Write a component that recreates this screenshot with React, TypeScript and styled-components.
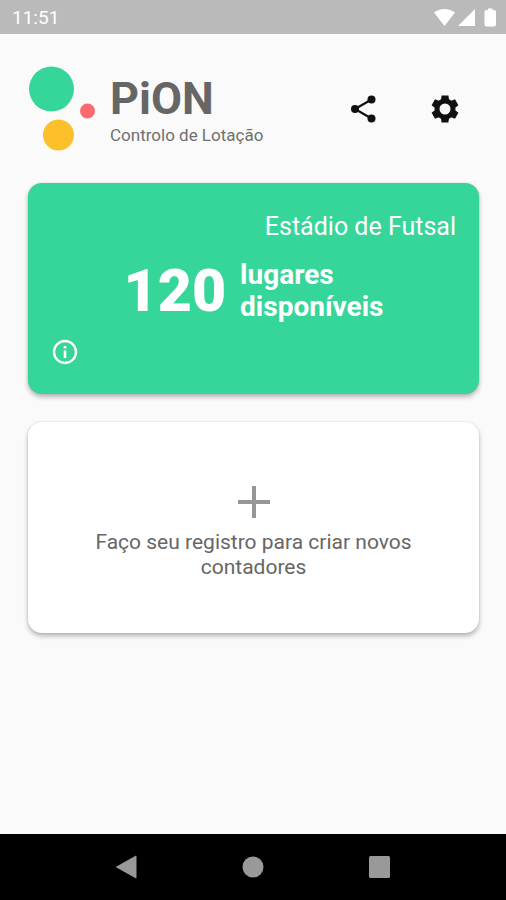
import React from "react";
import styled, { createGlobalStyle } from "styled-components";

const GlobalStyle = createGlobalStyle`
  * { box-sizing: border-box; }
  body { margin: 0; background: #fafafa; font-family: Roboto, sans-serif; }
  svg { display: block; }
  button { font: inherit; border: 0; padding: 0; background: none; color: inherit; cursor: pointer; }
  h1, h2, p { margin: 0; }
`;

const Screen = styled.div`
  min-height: 100vh;
  display: flex;
  flex-direction: column;
  background: #fafafa;
`;

const StatusBar = styled.div`
  height: 34px;
  flex: none;
  display: flex;
  align-items: center;
  justify-content: space-between;
  padding: 2px 8px 0 12px;
  background: #bababa;
  color: #fff;
  font-size: 19px;
  line-height: 24px;
`;

const Content = styled.main`
  flex: 1;
  display: flex;
  flex-direction: column;
  gap: 28px;
  padding: 32px 27px 28px 28px;
`;

const Header = styled.header`
  display: flex;
  align-items: center;
  justify-content: space-between;
  margin-bottom: 3px;
`;

const Brand = styled.div`
  display: flex;
  align-items: center;
  gap: 14px;
`;

const BrandText = styled.div`
  padding-top: 4px;
`;

const BrandName = styled.h1`
  font-size: 45px;
  line-height: 48px;
  font-weight: 700;
  color: #666;
`;

const Tagline = styled.p`
  font-size: 17px;
  line-height: 24px;
  color: #707070;
`;

const Actions = styled.div`
  display: flex;
  gap: 50px;
  padding-right: 18px;
`;

const IconButton = styled.button`
  width: 32px;
  height: 32px;
  display: grid;
  place-items: center;
`;

const Card = styled.section`
  min-height: 211px;
  display: flex;
  flex-direction: column;
  border-radius: 14px;
  box-shadow: 0 3px 5px rgba(0, 0, 0, 0.28), 0 0 2px rgba(0, 0, 0, 0.12);
`;

const VenueCard = styled(Card)`
  padding: 28px 23px;
  background: #36d59a;
  color: #fff;
`;

const VenueName = styled.h2`
  font-size: 25px;
  line-height: 32px;
  font-weight: 400;
  text-align: right;
`;

const Availability = styled.div`
  display: flex;
  align-items: center;
  justify-content: center;
  gap: 14px;
  margin-top: 16px;
`;

const Count = styled.span`
  font-size: 59px;
  line-height: 64px;
  font-weight: 900;
`;

const CountLabel = styled.span`
  font-size: 28px;
  line-height: 32px;
  font-weight: 700;
`;

const InfoButton = styled(IconButton)`
  margin-top: 15px;
  width: 28px;
  height: 28px;
`;

const AddCard = styled(Card)`
  background: #fff;
`;

const AddButton = styled.button`
  flex: 1;
  display: flex;
  flex-direction: column;
  align-items: center;
  justify-content: center;
  gap: 12px;
  padding: 10px 60px 0;
  && {
    font-size: 21px;
    line-height: 25px;
    color: #666;
  }
`;

const NavBar = styled.nav`
  height: 66px;
  flex: none;
  display: grid;
  grid-template-columns: repeat(3, 25%);
  justify-content: center;
  align-items: center;
  background: #000;
`;

const NavButton = styled.button`
  height: 48px;
  display: grid;
  place-items: center;
`;

const Logo = () => (
  <svg width="68" height="86" viewBox="0 0 68 86" aria-hidden="true">
    <circle cx="23.5" cy="23" r="22.5" fill="#36d59a" />
    <circle cx="59.5" cy="45" r="7.5" fill="#f96b70" />
    <circle cx="30.5" cy="69" r="15.5" fill="#fcc02a" />
  </svg>
);

const StatusIcons = () => (
  <svg width="64" height="20" viewBox="0 0 64 20" fill="#fff" aria-hidden="true">
    <path d="M0 4.5C6 -.2 15 -.2 21 4.5L10.500 18Z" />
    <path d="M41 1V18H24Z" />
    <path d="M52.500 2H54V.5H58.500V2H60Q62 2 62 4V16.500Q62 18.500 60 18.500H52.500Q50.500 18.500 50.500 16.500V4Q50.500 2 52.500 2Z" />
  </svg>
);

const ShareIcon = () => (
  <svg width="32" height="32" viewBox="0 0 32 32" fill="#111" aria-hidden="true">
    <path d="M24.500 6.500L8 16L24.500 25.500" fill="none" stroke="#111" strokeWidth="2.200" />
    <circle cx="24.500" cy="6.500" r="4" />
    <circle cx="8" cy="16" r="4" />
    <circle cx="24.500" cy="25.500" r="4" />
  </svg>
);

const GearIcon = () => (
  <svg width="32" height="32" viewBox="0 0 32 32" aria-hidden="true">
    <circle cx="16" cy="16" r="8" fill="none" stroke="#111" strokeWidth="5" />
    {[0, 60, 120, 180, 240, 300].map((angle) => (
      <path
        key={angle}
        transform={`rotate(${angle} 16 16)`}
        d="M12.600 2.500H19.400L20.300 8.500H11.700Z"
        fill="#111"
      />
    ))}
  </svg>
);

const InfoIcon = () => (
  <svg width="26" height="26" viewBox="0 0 26 26" aria-hidden="true">
    <circle cx="13" cy="13" r="11" fill="none" stroke="#fff" strokeWidth="2.300" />
    <path d="M11.700 7H14.300V9.500H11.700ZM11.700 11.500H14.300V19H11.700Z" fill="#fff" />
  </svg>
);

const PlusIcon = () => (
  <svg width="32" height="32" viewBox="0 0 32 32" aria-hidden="true">
    <path d="M16 0V32M0 16H32" stroke="#969696" strokeWidth="4" />
  </svg>
);

export default function App() {
  return (
    <Screen>
      <GlobalStyle />
      <StatusBar>
        <time>11:51</time>
        <StatusIcons />
      </StatusBar>
      <Content>
        <Header>
          <Brand>
            <Logo />
            <BrandText>
              <BrandName>PiON</BrandName>
              <Tagline>Controlo de Lotação</Tagline>
            </BrandText>
          </Brand>
          <Actions>
            <IconButton type="button" aria-label="Partilhar">
              <ShareIcon />
            </IconButton>
            <IconButton type="button" aria-label="Definições">
              <GearIcon />
            </IconButton>
          </Actions>
        </Header>
        <VenueCard>
          <VenueName>Estádio de Futsal</VenueName>
          <Availability>
            <Count>120</Count>
            <CountLabel>
              lugares
              <br />
              disponíveis
            </CountLabel>
          </Availability>
          <InfoButton type="button" aria-label="Informações">
            <InfoIcon />
          </InfoButton>
        </VenueCard>
        <AddCard>
          <AddButton type="button">
            <PlusIcon />
            <span>Faço seu registro para criar novos contadores</span>
          </AddButton>
        </AddCard>
      </Content>
      <NavBar>
        <NavButton type="button" aria-label="Voltar">
          <svg width="22" height="24" viewBox="0 0 22 24" aria-hidden="true">
            <path d="M20 1V23L0.500 12Z" fill="#999" stroke="#999" strokeLinejoin="round" />
          </svg>
        </NavButton>
        <NavButton type="button" aria-label="Início">
          <svg width="22" height="22" viewBox="0 0 22 22" aria-hidden="true">
            <circle cx="11" cy="11" r="10.500" fill="#999" />
          </svg>
        </NavButton>
        <NavButton type="button" aria-label="Recentes">
          <svg width="22" height="22" viewBox="0 0 22 22" aria-hidden="true">
            <rect width="21" height="22" rx="1.500" fill="#999" />
          </svg>
        </NavButton>
      </NavBar>
    </Screen>
  );
}
